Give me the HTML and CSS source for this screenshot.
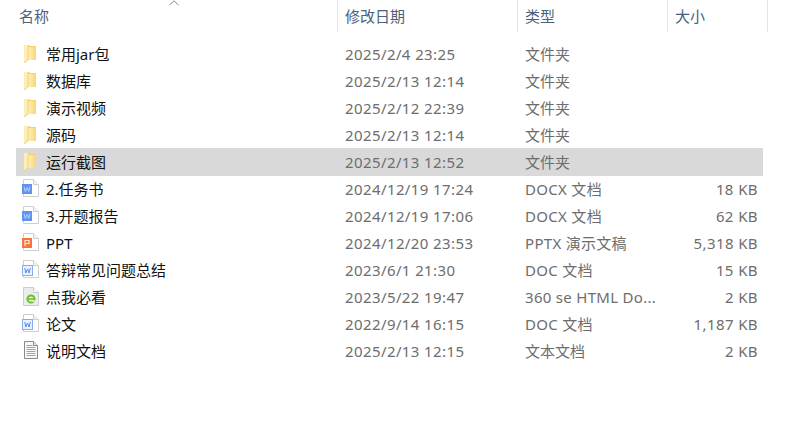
FILE: index.html
```html
<!DOCTYPE html>
<html lang="zh">
<head>
<meta charset="utf-8">
<title>文件列表</title>
<link rel="stylesheet" href="styles.css">
</head>
<body>
<svg class="defs" width="0" height="0">
  <defs>
    <linearGradient id="fold" x1="0" x2="1" y1="0" y2="0">
      <stop offset="0" stop-color="#fff0b8"/>
      <stop offset="1" stop-color="#f8d679"/>
    </linearGradient>
    <symbol id="folder" viewBox="0 0 18 20">
      <path d="M2 2h5l1 1h5.500a.5.5 0 0 1 .5.5V17H6L2 20z" fill="#f5cf69"/>
      <path d="M6 4h8v13H6z" fill="url(#fold)"/>
      <path d="M2 2h4v15l-4 3z" fill="#fdeeb6"/>
      <path d="M6 3.500V17l-4 3" fill="none" stroke="#e9c560" stroke-width=".7"/>
    </symbol>
    <symbol id="page" viewBox="0 0 18 20">
      <path d="M1.500 1.500h10l5 5v12h-15z" fill="#fff" stroke="#cfcfcf"/>
      <path d="M11.500 1.500v5h5" fill="#f3f3f3" stroke="#cfcfcf"/>
    </symbol>
    <symbol id="docx" viewBox="0 0 18 20">
      <use href="#page"/>
      <rect x="0" y="6" width="10" height="10" fill="#5f93ef"/>
      <path d="M2 8.500l1.300 5 1.700-4 1.700 4 1.300-5" fill="none" stroke="#b9d0fb" stroke-width="1"/>
    </symbol>
    <symbol id="doc" viewBox="0 0 18 20">
      <use href="#page"/>
      <rect x=".5" y="6.500" width="10" height="10" fill="#eaf1ff" stroke="#85acf4"/>
      <path d="M2.700 9l1.200 5 1.600-4 1.600 4 1.200-5" fill="none" stroke="#5b8dea" stroke-width="1"/>
    </symbol>
    <symbol id="pptx" viewBox="0 0 18 20">
      <use href="#page"/>
      <rect x="0" y="6" width="10" height="10" fill="#f2773f"/>
      <path d="M3 14V8.500h4v3H3" fill="none" stroke="#ffe4d6" stroke-width="1.200"/>
    </symbol>
    <symbol id="html" viewBox="0 0 18 20">
      <path d="M1.500 1.500h10l5 5v13h-15z" fill="#ececec" stroke="#cdcdcd"/>
      <path d="M11.500 1.500v5h5" fill="#fafafa" stroke="#cdcdcd"/>
      <circle cx="9" cy="13" r="3.600" fill="none" stroke="#68c41f" stroke-width="2"/>
      <path d="M5.500 13h7" stroke="#68c41f" stroke-width="1.500"/>
      <path d="M10.500 15.300l3-.5" stroke="#ececec" stroke-width="1.400"/>
    </symbol>
    <symbol id="text" viewBox="0 0 18 20">
      <path d="M2.500 1.500h9l4 4v13h-13z" fill="#f9f9f9" stroke="#8a8a8a"/>
      <path d="M11.500 1.500v4h4" fill="#e8e8e8" stroke="#8a8a8a"/>
      <path d="M4.500 5.500h6M4.500 7.500h9M4.500 9.500h9M4.500 11.500h9M4.500 13.500h9M4.500 15.500h9" stroke="#a4a4a4" stroke-width="1"/>
    </symbol>
  </defs>
</svg>

<header class="head">
  <svg class="sort" width="10" height="6" viewBox="0 0 10 6"><path d="M.5 5L5 .8 9.500 5" fill="none" stroke="#8a8a8a"/></svg>
  <div class="hcell hname">名称</div>
  <div class="hcell">修改日期</div>
  <div class="hcell">类型</div>
  <div class="hcell">大小</div>
</header>

<main class="list">
  <div class="row"><svg class="icon"><use href="#folder"/></svg><span class="name">常用jar包</span><span class="cell">2025/2/4 23:25</span><span class="type">文件夹</span><span class="size"></span></div>
  <div class="row"><svg class="icon"><use href="#folder"/></svg><span class="name">数据库</span><span class="cell">2025/2/13 12:14</span><span class="type">文件夹</span><span class="size"></span></div>
  <div class="row"><svg class="icon"><use href="#folder"/></svg><span class="name">演示视频</span><span class="cell">2025/2/12 22:39</span><span class="type">文件夹</span><span class="size"></span></div>
  <div class="row"><svg class="icon"><use href="#folder"/></svg><span class="name">源码</span><span class="cell">2025/2/13 12:14</span><span class="type">文件夹</span><span class="size"></span></div>
  <div class="row selected"><svg class="icon"><use href="#folder"/></svg><span class="name">运行截图</span><span class="cell">2025/2/13 12:52</span><span class="type">文件夹</span><span class="size"></span></div>
  <div class="row"><svg class="icon"><use href="#docx"/></svg><span class="name">2.任务书</span><span class="cell">2024/12/19 17:24</span><span class="type latin">DOCX 文档</span><span class="size">18 KB</span></div>
  <div class="row"><svg class="icon"><use href="#docx"/></svg><span class="name">3.开题报告</span><span class="cell">2024/12/19 17:06</span><span class="type latin">DOCX 文档</span><span class="size">62 KB</span></div>
  <div class="row"><svg class="icon"><use href="#pptx"/></svg><span class="name">PPT</span><span class="cell">2024/12/20 23:53</span><span class="type latin">PPTX 演示文稿</span><span class="size">5,318 KB</span></div>
  <div class="row"><svg class="icon"><use href="#doc"/></svg><span class="name">答辩常见问题总结</span><span class="cell">2023/6/1 21:30</span><span class="type latin">DOC 文档</span><span class="size">15 KB</span></div>
  <div class="row"><svg class="icon"><use href="#html"/></svg><span class="name">点我必看</span><span class="cell">2023/5/22 19:47</span><span class="type latin">360 se HTML Do...</span><span class="size">2 KB</span></div>
  <div class="row"><svg class="icon"><use href="#doc"/></svg><span class="name">论文</span><span class="cell">2022/9/14 16:15</span><span class="type latin">DOC 文档</span><span class="size">1,187 KB</span></div>
  <div class="row"><svg class="icon"><use href="#text"/></svg><span class="name">说明文档</span><span class="cell">2025/2/13 12:15</span><span class="type">文本文档</span><span class="size">2 KB</span></div>
</main>
</body>
</html>
```

FILE: styles.css
```css
html, body { margin: 0; padding: 0; background: #fff; overflow: hidden; }
body {
  width: 787px;
  height: 434px;
  font-family: "Noto Sans", "Noto Sans CJK SC", sans-serif;
  font-size: 15px;
}
.defs { position: absolute; }
.head {
  position: relative;
  display: grid;
  grid-template-columns: 338px 180px 150px 100px;
  height: 32px;
}
.sort { position: absolute; left: 169px; top: 0; }
.hcell {
  border-right: 1px solid #e5e5e5;
  padding-left: 7px;
  line-height: 32px;
  color: #4c607a;
  box-sizing: border-box;
}
.hname { padding-left: 19px; }
.list { padding: 8px 24px 0 16px; }
.row {
  display: grid;
  grid-template-columns: 30px 299px 180px 120px 118px;
  height: 27px;
  line-height: 29px;
  color: #6d6d6d;
  white-space: nowrap;
}
.selected { background: #d9d9d9; box-shadow: 0 1px 0 #d9d9d9; }
.icon { width: 18px; height: 20px; margin: 3px 0 0 6px; }
.name { color: #111; }
.cell { letter-spacing: .4px; }
.latin { letter-spacing: .3px; }
.size { text-align: right; padding-right: 5px; letter-spacing: .4px; }
```
